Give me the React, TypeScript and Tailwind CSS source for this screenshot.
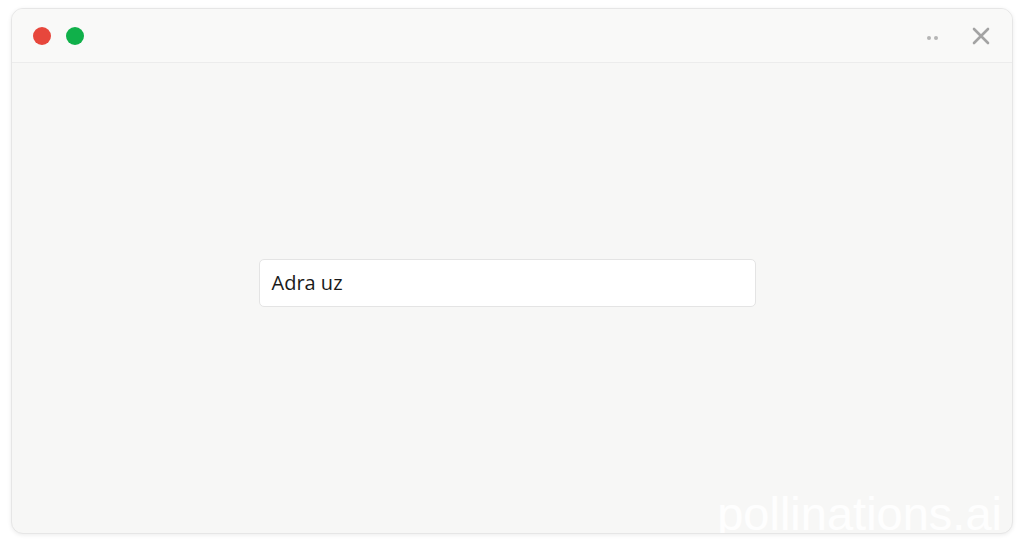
export default function App() {
  return (
    <div className="h-[543px] w-[1024px] bg-white pt-[8px] pl-[11px]" style={{ fontFamily: '"Open Sans", "Noto Sans", sans-serif' }}>
      <div className="relative flex h-[526px] w-[1002px] flex-col overflow-hidden rounded-[12px] border border-[#e6e6e6] bg-[#f7f7f6] shadow-[0_1px_4px_rgba(0,0,0,0.08)]">
        {/* Title bar */}
        <div className="flex h-[54px] items-center justify-between border-b border-[#ececec] bg-[#f9f9f8] pl-[21px] pr-[22px]">
          <div className="flex items-center gap-[15px]">
            <span className="h-[18px] w-[18px] rounded-full bg-[#e7473c]" />
            <span className="h-[18px] w-[18px] rounded-full bg-[#10b04a]" />
          </div>
          <div className="flex items-center gap-[34px]">
            <div className="flex items-center gap-[3px] pt-[4px]">
              <span className="h-[4px] w-[4px] rounded-full bg-[#b5b5b5]" />
              <span className="h-[4px] w-[4px] rounded-full bg-[#b5b5b5]" />
            </div>
            <svg width="18" height="18" viewBox="0 0 18 18" fill="none" stroke="#a3a3a3" strokeWidth="2.6" strokeLinecap="round">
              <path d="M2 2L16 16M16 2L2 16" />
            </svg>
          </div>
        </div>

        {/* Content */}
        <div className="flex flex-1 justify-center pt-[196px]">
          <div className="ml-[-10px] flex h-[48px] w-[497px] items-center rounded-[5px] border border-[#e4e4e4] bg-white px-[12px]">
            <span className="text-[20px] text-[#1a1a1a]">Adra uz</span>
          </div>
        </div>

        {/* Watermark */}
        <span
          className="absolute bottom-[-4px] right-[10px] text-[47px] leading-none text-white/90"
          style={{ fontFamily: '"Liberation Sans", Arial, sans-serif' }}
        >
          pollinations.ai
        </span>
      </div>
    </div>
  );
}
